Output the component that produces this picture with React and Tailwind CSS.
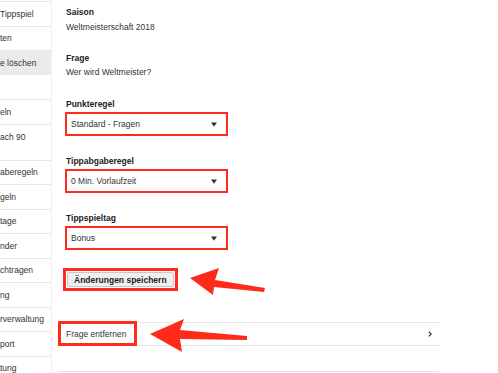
import React from 'react';

const RED = 'border-[#ff2b1a]';

const sidebarTop = [
  { label: 'Tippspiel' },
  { label: 'ten' },
  { label: 'e löschen', active: true },
];

const sidebarMid = [
  { label: 'eln' },
  { label: 'ach 90', tall: true },
  { label: 'aberegeln' },
  { label: 'geln' },
  { label: 'tage' },
  { label: 'nder' },
  { label: 'chtragen' },
  { label: 'ng' },
  { label: 'rverwaltung' },
  { label: 'port' },
  { label: 'tung' },
];

const SideItem = ({ label, active, tall }) => (
  <div
    className={`border-t border-[#e8e8e8] whitespace-nowrap overflow-hidden ${
      tall ? 'h-[36px] pt-[6px]' : 'h-[24.5px] flex items-center'
    } ${active ? 'bg-[#ebebeb]' : ''}`}
  >
    <span className="leading-[12px]">{label}</span>
  </div>
);

const Caret = () => (
  <svg width="6" height="5" viewBox="0 0 6 5">
    <polygon points="0,0.5 6,0.5 3,4.8" fill="#333" />
  </svg>
);

const SelectField = ({ label, value, className = '' }) => (
  <div className={className}>
    <div className="font-bold text-[#222] leading-[12px]">{label}</div>
    <div
      className={`mt-[2px] -ml-[1px] w-[163px] h-[24px] border-2 ${RED} flex items-center justify-between pl-[4px] pr-[9px] bg-white`}
    >
      <span>{value}</span>
      <Caret />
    </div>
  </div>
);

const Arrows = () => (
  <svg className="absolute inset-0 pointer-events-none" width="498" height="373" viewBox="0 0 498 373">
    <polygon
      points="190,278 219,268 215,280 265,288 264,292 214,287 213,295"
      fill="#ff2b1a"
    />
    <polygon
      points="150,334 184,319 180,330 247,336 247,340 180,339 182,352"
      fill="#ff2b1a"
    />
  </svg>
);

export default function App() {
  return (
    <div
      className="relative w-[498px] h-[373px] overflow-hidden bg-white text-[8.5px] text-[#333] flex"
      style={{ fontFamily: '"Liberation Sans", Arial, sans-serif' }}
    >
      {/* sidebar */}
      <aside className="w-[52px] shrink-0 border-r border-[#f0f0f0] pt-[1px]">
        {sidebarTop.map((item) => (
          <SideItem key={item.label} {...item} />
        ))}
        <div className="h-[24.5px]" />
        {sidebarMid.map((item) => (
          <SideItem key={item.label} {...item} />
        ))}
      </aside>

      {/* main */}
      <main className="flex-1 pl-[14px] pt-[6px]">
        <div>
          <div className="font-bold text-[#222] leading-[12px]">Saison</div>
          <div className="mt-[3px] leading-[12px]">Weltmeisterschaft 2018</div>
        </div>
        <div className="mt-[19px]">
          <div className="font-bold text-[#222] leading-[12px]">Frage</div>
          <div className="mt-[2px] leading-[12px]">Wer wird Weltmeister?</div>
        </div>

        <SelectField className="mt-[20px]" label="Punkteregel" value="Standard - Fragen" />
        <SelectField className="mt-[19px]" label="Tippabgaberegel" value="0 Min. Vorlaufzeit" />
        <SelectField className="mt-[19px]" label="Tippspieltag" value="Bonus" />

        <div className={`mt-[18px] -ml-[3px] w-[115px] h-[23px] border-[3px] ${RED} p-px`}>
          <button className="w-full h-full bg-[#efefef] border border-[#c8c8c8] rounded-[2px] font-bold text-[#222] text-left pl-[6px] leading-[12px]">
            Änderungen speichern
          </button>
        </div>

        <div className="mt-[31px] -ml-[8px] w-[381px] border-t border-[#e6e6e6]">
          <div className="relative h-[23px] flex items-center justify-between pl-[8px] pr-[7px] border-b border-[#e6e6e6]">
            <span className="leading-[12px]">Frage entfernen</span>
            <svg width="4" height="6" viewBox="0 0 4 6">
              <polyline points="0.8,0.6 3.2,3 0.8,5.4" fill="none" stroke="#333" strokeWidth="1.2" />
            </svg>
            <div className={`absolute left-0 -top-[2px] w-[79px] h-[25px] border-[3px] ${RED}`} />
          </div>
          <div className="h-[26px] border-b border-[#e6e6e6]" />
        </div>
      </main>

      <Arrows />
    </div>
  );
}
